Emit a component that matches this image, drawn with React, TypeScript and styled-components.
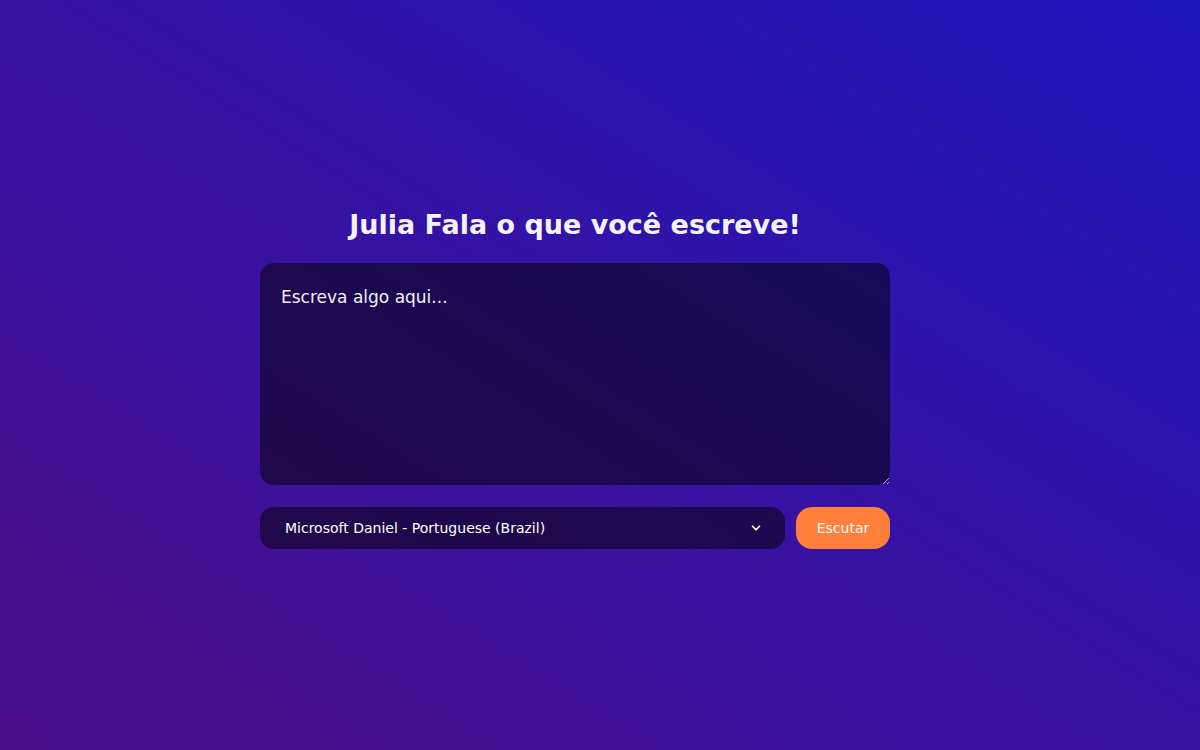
import React, { useState } from 'react';
import styled, { createGlobalStyle } from 'styled-components';

const GlobalStyle = createGlobalStyle`
  * {
    box-sizing: border-box;
  }
  html, body {
    margin: 0;
    padding: 0;
  }
  body {
    font-family: 'DejaVu Sans', Verdana, sans-serif;
    background: linear-gradient(to top right, #4b0e88, #1f17bd);
    min-height: 100vh;
  }
`;

const voices = ['Microsoft Daniel - Portuguese (Brazil)', 'Microsoft Maria - Portuguese (Brazil)'];

const App = () => {
  const [text, setText] = useState('');
  const [voice, setVoice] = useState(voices[0]);

  return (
    <>
      <GlobalStyle />
      <Page>
        <Container>
          <Title>Julia Fala o que você escreve!</Title>
          <TextArea
            placeholder="Escreva algo aqui..."
            value={text}
            onChange={(e) => setText(e.target.value)}
          />
          <Controls>
            <SelectWrap>
              <Select value={voice} onChange={(e) => setVoice(e.target.value)}>
                {voices.map((v) => (
                  <option key={v}>{v}</option>
                ))}
              </Select>
              <Chevron viewBox="0 0 24 24">
                <path d="M6 9l6 6 6-6" />
              </Chevron>
            </SelectWrap>
            <Button>Escutar</Button>
          </Controls>
        </Container>
      </Page>
    </>
  );
};

export default App;

const Page = styled.div`
  min-height: 100vh;
  padding: 8px 50px 0 0;
  display: flex;
  justify-content: center;
  align-items: center;
`;
const Container = styled.div`
  width: 630px;
  display: flex;
  flex-direction: column;
  align-items: center;
`;
const Title = styled.h1`
  margin: 0 0 23px;
  color: #f4f2ff;
  font-size: 27px;
  font-weight: 700;
`;
const TextArea = styled.textarea`
  width: 100%;
  height: 222px;
  padding: 24px 21px;
  border: none;
  border-radius: 14px;
  background: rgba(0, 0, 0, 0.5);
  color: #ffffff;
  font-family: inherit;
  font-size: 17px;
  outline: none;
  &::placeholder {
    color: #f2eefa;
  }
`;
const Controls = styled.div`
  width: 100%;
  display: flex;
  gap: 11px;
  margin-top: 22px;
`;
const SelectWrap = styled.div`
  position: relative;
  flex: 1;
`;
const Select = styled.select`
  width: 100%;
  height: 42px;
  padding: 0 25px;
  border: none;
  border-radius: 14px;
  background: rgba(0, 0, 0, 0.5);
  color: #ffffff;
  font-family: inherit;
  font-size: 14px;
  appearance: none;
  outline: none;
`;
const Chevron = styled.svg`
  position: absolute;
  right: 22px;
  top: 14px;
  width: 14px;
  height: 14px;
  fill: none;
  stroke: #ffffff;
  stroke-width: 3;
  stroke-linecap: round;
  stroke-linejoin: round;
  pointer-events: none;
`;
const Button = styled.button`
  width: 94px;
  height: 42px;
  border: none;
  border-radius: 16px;
  background: #ff7f3b;
  color: #ffffff;
  font-family: inherit;
  font-size: 14px;
  cursor: pointer;
`;
